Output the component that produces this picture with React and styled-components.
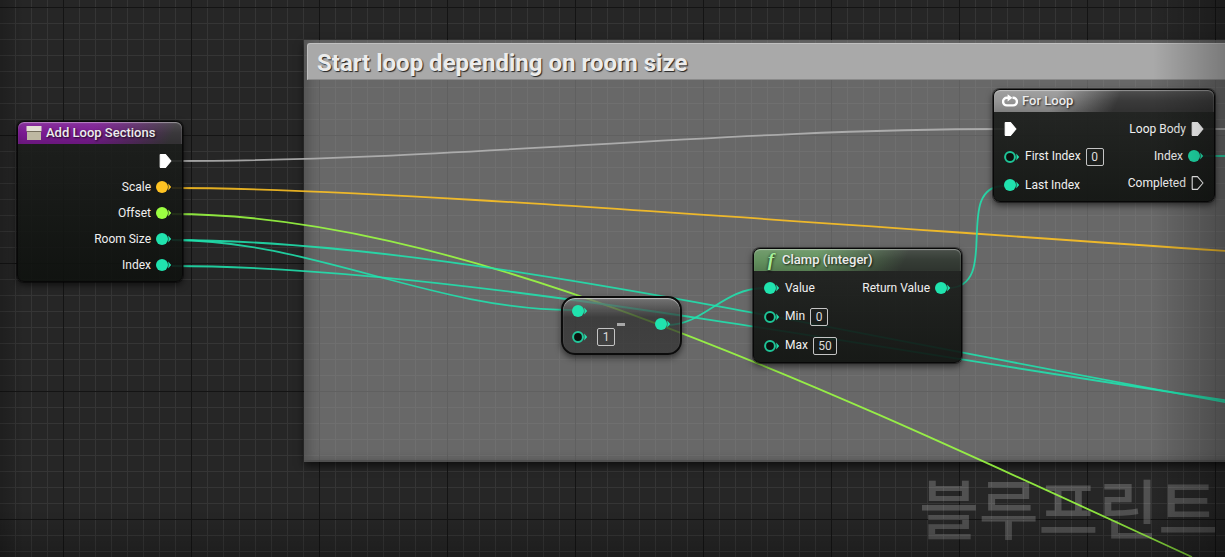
import React from 'react'
import styled, { createGlobalStyle } from 'styled-components'

const TEAL = '#20e3ae'
const GOLD = '#ffc322'
const LIME = '#9cff42'

const GlobalStyle = createGlobalStyle`
	* {
		box-sizing: border-box;
	}
	body {
		margin: 0;
		background: #262626;
		font-family: Roboto, 'Noto Sans CJK KR', sans-serif;
		overflow: hidden;
	}
`

const Graph = styled.main`
	position: relative;
	min-height: 100vh;
	overflow: hidden;
	background-color: #262626;
	background-image: linear-gradient(90deg, #141414 1px, transparent 1px),
		linear-gradient(#141414 1px, transparent 1px),
		linear-gradient(90deg, #353535 1px, transparent 1px),
		linear-gradient(#353535 1px, transparent 1px);
	background-size: 128px 128px, 128px 128px, 16px 16px, 16px 16px;
	background-position: 63px 0, 0 7px, 15px 0, 0 7px;
`

const Vignette = styled.div`
	position: absolute;
	inset: 0;
	pointer-events: none;
	background: linear-gradient(90deg, rgba(0, 0, 0, 0.2), transparent 24px),
		linear-gradient(270deg, rgba(0, 0, 0, 0.28), transparent 72px),
		linear-gradient(0deg, rgba(0, 0, 0, 0.22), transparent 48px);
`

const Comment = styled.section`
	position: absolute;
	left: 304px;
	right: -40px;
	top: 40px;
	height: 422px;
	padding: 3px;
	background: rgba(160, 160, 160, 0.54);
	border-bottom: 2px solid rgba(70, 70, 70, 0.7);
	box-shadow: 0 4px 8px rgba(0, 0, 0, 0.6),
		inset 6px 0 10px rgba(50, 50, 50, 0.35);
`

const CommentTitle = styled.h1`
	margin: 0;
	padding: 0 9px;
	height: 37px;
	line-height: 38px;
	font-size: 24px;
	font-weight: 700;
	color: #ececec;
	text-shadow: 1px 1px 1px #222;
	background: #a9a9a9;
	border-top: 1px solid #c0c0c0;
	border-left: 1px solid #c0c0c0;
	border-bottom: 1px solid #8a8a8a;
	border-radius: 3px 0 0 0;
`

const Wires = styled.svg`
	position: absolute;
	left: 0;
	top: 0;
	width: 100%;
	height: 100%;
	overflow: visible;
	fill: none;
	stroke-width: 1.8;
	stroke-opacity: 0.88;
	pointer-events: none;
`

const Node = styled.article`
	position: absolute;
	left: ${p => p.$x}px;
	top: ${p => p.$y}px;
	width: ${p => p.$w}px;
	border: 1px solid #080808;
	border-radius: 7px;
	background: linear-gradient(rgba(29, 31, 29, 0.88), rgba(14, 17, 14, 0.9));
	box-shadow: 0 0 0 1px rgba(0, 0, 0, 0.4), 0 3px 7px rgba(0, 0, 0, 0.6);
	color: #f0f0f0;
	font-size: 12px;
	line-height: 16px;
`

const NodeHeader = styled.header`
	display: flex;
	align-items: center;
	gap: 4px;
	height: 22px;
	padding: 0 8px;
	border-radius: 6px 6px 0 0;
	background: linear-gradient(
			rgba(255, 255, 255, 0.1),
			transparent 50%,
			rgba(0, 0, 0, 0.15)
		),
		linear-gradient(
			115deg,
			${p => p.$tint} ${p => p.$from},
			${p => p.$rest} ${p => p.$to}
		);
	box-shadow: inset 0 1px 1px rgba(255, 255, 255, 0.4),
		inset -1px 0 1px rgba(255, 255, 255, 0.08);
`

const NodeTitle = styled.h2`
	margin: 0;
	font-size: 13px;
	line-height: 16px;
	font-weight: 500;
	color: #ececec;
	text-shadow: 1px 1px 2px rgba(0, 0, 0, 0.8);
`

const NodeBody = styled.div`
	display: flex;
	justify-content: ${p => (p.$outputOnly ? 'flex-end' : 'space-between')};
	padding: 8px 10px 7px;
`

const Pins = styled.ul`
	display: flex;
	flex-direction: column;
	align-items: ${p => (p.$out ? 'flex-end' : 'flex-start')};
	gap: ${p => p.$gap}px;
	margin: 0;
	padding: 0;
	list-style: none;
`

const Pin = styled.li`
	display: flex;
	align-items: center;
	gap: ${p => (p.$spaced ? 9 : 5)}px;
	height: 18px;
	white-space: nowrap;
`

const PinLabel = styled.label`
	padding-bottom: 2px;
`

const PinSvg = styled.svg`
	display: block;
	flex: none;
`

const ValueInput = styled.input`
	width: ${p => (p.$wide ? 24 : 18)}px;
	height: 18px;
	padding: 0;
	border: 1px solid #c4c4c4;
	border-radius: 2px;
	background: transparent;
	color: #dcdcdc;
	font: 12px Roboto, sans-serif;
	text-align: center;
`

const FunctionMark = styled.span`
	width: 16px;
	font: italic bold 19px/20px 'Liberation Serif', serif;
	text-align: right;
	padding-right: 4px;
	color: #a5f09a;
	text-shadow: 0 1px 3px #000;
`

const MathNode = styled(Node)`
	display: flex;
	align-items: center;
	gap: 2px;
	padding: 4px 9px 7px;
	border: 2px solid #0c0c0c;
	border-radius: 14px;
	background: linear-gradient(
		rgba(120, 120, 120, 0.7),
		rgba(44, 44, 44, 0.7) 35%,
		rgba(48, 48, 48, 0.7)
	);
	box-shadow: 0 3px 6px rgba(0, 0, 0, 0.5),
		inset 0 1px 1px rgba(255, 255, 255, 0.55);
`

const Minus = styled.span`
	width: 8px;
	height: 3px;
	background: #a8a8a8;
`

const MathOutput = styled.div`
	margin-left: auto;
`

const Watermark = styled.div`
	position: absolute;
	right: 7px;
	bottom: 3px;
	font-family: 'Noto Sans CJK KR', sans-serif;
	font-size: 65px;
	line-height: 96px;
	font-weight: 500;
	color: rgba(255, 255, 255, 0.2);
	white-space: nowrap;
`

const DataPin = ({ color = TEAL, hollow }) => (
	<PinSvg width="16" height="14" viewBox="0 0 16 14">
		{hollow ? (
			<circle
				cx="6"
				cy="7"
				r="4.900"
				fill="#0c120f"
				stroke={color}
				strokeWidth="2"
				strokeOpacity="0.85"
			/>
		) : (
			<circle cx="6" cy="7" r="6" fill={color} />
		)}
		<path d="M12.200 3.600q.6 3.400 0 6.800l3-3.400z" fill={color} />
	</PinSvg>
)

const ExecPin = ({ hollow }) => (
	<PinSvg width="13" height="14" viewBox="0 0 13 14">
		<path
			d="M1.200 1.200q0-.6.6-.6h4.700L12 7l-5.500 6.400H1.800q-.6 0-.6-.6z"
			fill={hollow ? 'none' : '#fff'}
			stroke="#fff"
			strokeWidth="1.100"
			strokeLinejoin="round"
		/>
	</PinSvg>
)

const EventIcon = () => (
	<svg width="16" height="16" viewBox="0 0 16 16">
		<rect x="0.5" y="1" width="15" height="5" fill="#e4e0d6" />
		<rect x="0.5" y="6" width="15" height="1" fill="#77705f" />
		<rect x="1" y="7" width="14" height="8" fill="#beb8a2" />
	</svg>
)

const LoopIcon = () => (
	<svg width="16" height="16" viewBox="0 0 16 16" fill="none">
		<path
			d="M10.500 4.800h.6a3.800 3.800 0 0 1 0 7.600H4.900a3.800 3.800 0 0 1 0-7.600h2"
			stroke="#fff"
			strokeWidth="2.400"
		/>
		<path d="M5.600 1.200L10.400 4.800 5.600 8.400z" fill="#fff" />
	</svg>
)

export default function App() {
	return (
		<Graph>
			<GlobalStyle />
			<Comment>
				<CommentTitle>Start loop depending on room size</CommentTitle>
			</Comment>
			<Watermark>블루프린트</Watermark>

			<Wires>
				<path stroke="#b4b4b4" d="M172 161C450 161 720 129 1004 129" />
				<path stroke="#b4b4b4" d="M1203 129H1400" />
				<path stroke={GOLD} d="M172 188C360 188 700 215 1240 252" />
				<path stroke={LIME} d="M172 214C460 214 820 386 1192 557" />
				<path stroke={TEAL} d="M172 240C440 240 800 325 1230 403" />
				<path stroke={TEAL} d="M172 240C311 240 433 310 572 310" />
				<path stroke={TEAL} d="M172 266C440 266 800 337 1230 401" />
				<path stroke={TEAL} d="M667 325C705 325 722 288 765 288" />
				<path stroke={TEAL} d="M948 288C1002 288 952 186 1004 186" />
				<path stroke={TEAL} d="M1203 156H1400" />
			</Wires>

			<Node $x={17} $y={121} $w={166}>
				<NodeHeader $tint="#7b1b92" $from="45%" $rest="#3a383b" $to="92%">
					<EventIcon />
					<NodeTitle>Add Loop Sections</NodeTitle>
				</NodeHeader>
				<NodeBody $outputOnly>
					<Pins $out $gap={8}>
						<Pin><ExecPin /></Pin>
						<Pin>Scale <DataPin color={GOLD} /></Pin>
						<Pin>Offset <DataPin color={LIME} /></Pin>
						<Pin>Room Size <DataPin /></Pin>
						<Pin>Index <DataPin /></Pin>
					</Pins>
				</NodeBody>
			</Node>

			<MathNode $x={561} $y={296} $w={121}>
				<Pins $gap={8}>
					<Pin><DataPin /></Pin>
					<Pin $spaced>
						<DataPin hollow />
						<ValueInput aria-label="Subtrahend" defaultValue="1" />
					</Pin>
				</Pins>
				<Minus />
				<MathOutput><DataPin /></MathOutput>
			</MathNode>

			<Node $x={753} $y={248} $w={209}>
				<NodeHeader $tint="#64925f" $from="30%" $rest="#363d36" $to="72%">
					<FunctionMark>f</FunctionMark>
					<NodeTitle>Clamp (integer)</NodeTitle>
				</NodeHeader>
				<NodeBody>
					<Pins $gap={11}>
						<Pin><DataPin /> Value</Pin>
						<Pin>
							<DataPin hollow />
							<PinLabel htmlFor="min">Min</PinLabel>
							<ValueInput id="min" defaultValue="0" />
						</Pin>
						<Pin>
							<DataPin hollow />
							<PinLabel htmlFor="max">Max</PinLabel>
							<ValueInput id="max" defaultValue="50" $wide />
						</Pin>
					</Pins>
					<Pins $out $gap={11}>
						<Pin>Return Value <DataPin /></Pin>
					</Pins>
				</NodeBody>
			</Node>

			<Node $x={993} $y={89} $w={222}>
				<NodeHeader $tint="#969696" $from="28%" $rest="#3a3a3a" $to="56%">
					<LoopIcon />
					<NodeTitle>For Loop</NodeTitle>
				</NodeHeader>
				<NodeBody>
					<Pins $gap={10}>
						<Pin><ExecPin /></Pin>
						<Pin>
							<DataPin hollow />
							<PinLabel htmlFor="first">First Index</PinLabel>
							<ValueInput id="first" defaultValue="0" />
						</Pin>
						<Pin><DataPin /> Last Index</Pin>
					</Pins>
					<Pins $out $gap={9}>
						<Pin>Loop Body <ExecPin /></Pin>
						<Pin>Index <DataPin /></Pin>
						<Pin>Completed <ExecPin hollow /></Pin>
					</Pins>
				</NodeBody>
			</Node>
			<Vignette />
		</Graph>
	)
}
